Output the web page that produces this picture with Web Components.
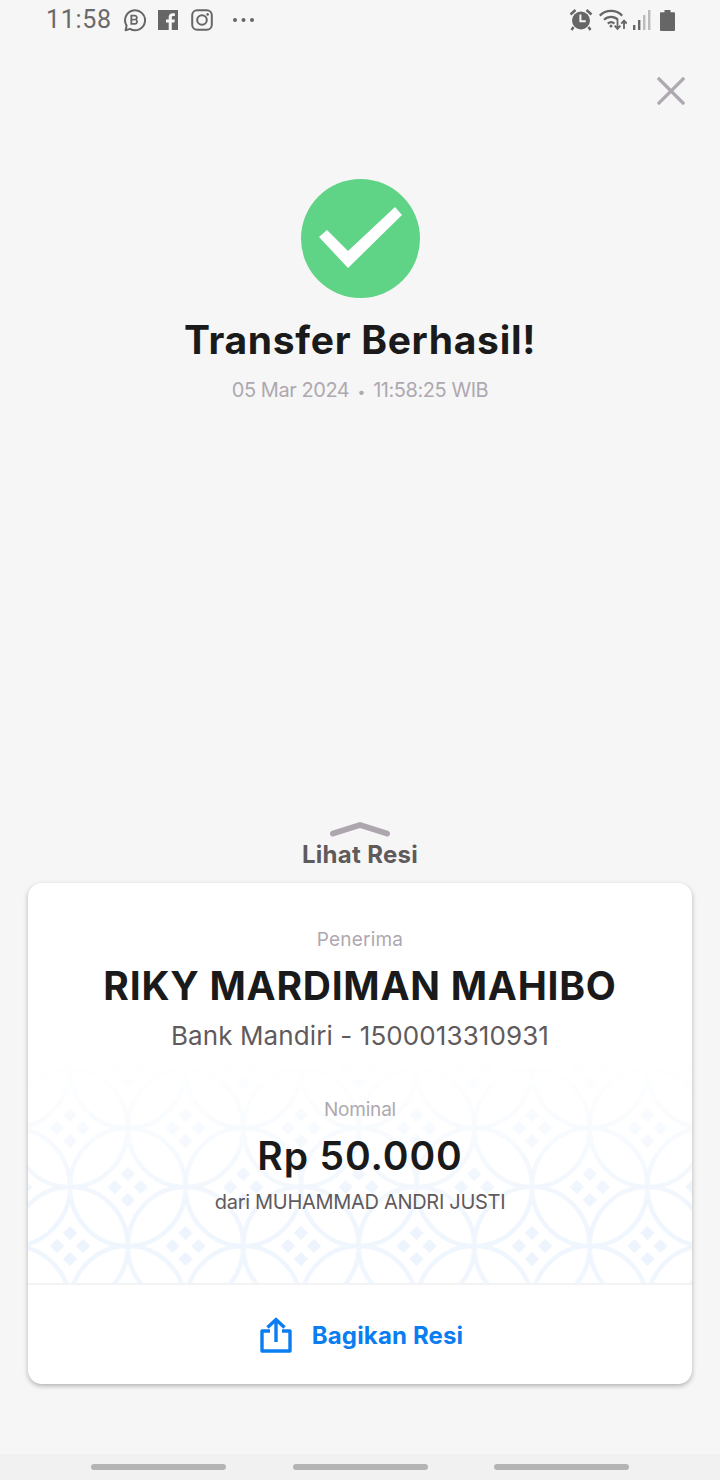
<!DOCTYPE html>
<html lang="id">
<head>
<meta charset="utf-8">
<title>Transfer Berhasil</title>
<style>
  html, body { margin: 0; padding: 0; background: #f6f6f6; }
  body { width: 720px; height: 1480px; overflow: hidden; font-family: Inter, "Liberation Sans", sans-serif; }
</style>
</head>
<body>
<transfer-screen>
  <status-bar time="11:58"></status-bar>
  <close-row></close-row>
  <success-hero heading="Transfer Berhasil!" day="05 Mar 2024" clock="11:58:25 WIB"></success-hero>
  <receipt-peek label="Lihat Resi"></receipt-peek>
  <receipt-card
    receiver="RIKY MARDIMAN MAHIBO"
    bank="Bank Mandiri - 1500013310931"
    amount="Rp 50.000"
    sender="dari MUHAMMAD ANDRI JUSTI"
    action="Bagikan Resi"></receipt-card>
  <nav-bar></nav-bar>
</transfer-screen>

<script>
class TransferScreen extends HTMLElement {
  constructor() {
    super();
    this.attachShadow({ mode: "open" });
    this.shadowRoot.innerHTML = `
      <style>
        :host { display: flex; flex-direction: column; height: 1480px; background: #f6f6f6; }
      </style>
      <slot></slot>
    `;
  }
}

class StatusBar extends HTMLElement {
  constructor() {
    super();
    this.attachShadow({ mode: "open" });
    this.shadowRoot.innerHTML = `
      <style>
        :host { display: flex; align-items: center; height: 40px; padding: 0 45px 0 46px; color: #666; }
        .time { font: 400 25px/40px Roboto, sans-serif; letter-spacing: .7px; color: #696969; margin-right: 10px; }
        .left, .right { display: flex; align-items: center; }
        .right { margin-left: auto; }
        svg { display: block; }
      </style>
      <div class="left">
        <span class="time" data-time></span>
        <svg width="24" height="24" viewBox="0 0 24 24" fill="none" stroke="#666" stroke-width="2">
          <path d="M3.600 22.200l1-4.600A10 10 0 1 1 8 20.900z" stroke-linejoin="round"/>
          <path d="M9.300 7.600h3.600a2 2 0 0 1 .6 3.900 2.200 2.200 0 0 1-.4 4.300H9.300z" stroke-width="1.800"/>
          <path d="M9.300 11.600h3.600" stroke-width="1.600"/>
        </svg>
        <svg style="margin-left:12px" width="20" height="20" viewBox="0 0 20 20">
          <path fill="#666" d="M0 0h20v20h-6.200v-7.600h2.600l.4-3h-3V7.500c0-.9.3-1.500 1.500-1.500h1.600V3.300c-.3 0-1.200-.1-2.300-.1-2.300 0-3.900 1.400-3.900 4v2.200H8v3h2.700V20H0z"/>
        </svg>
        <svg style="margin-left:13px" width="22" height="22" viewBox="0 0 22 22" fill="none" stroke="#666" stroke-width="2">
          <rect x="1.200" y="1.200" width="19.600" height="19.600" rx="5"/>
          <circle cx="11" cy="11" r="4.800"/>
          <circle cx="16.600" cy="5.400" r="1.300" fill="#666" stroke="none"/>
        </svg>
        <svg style="margin-left:19px" width="23" height="6" viewBox="0 0 23 6" fill="#666">
          <circle cx="3" cy="3" r="2"/><circle cx="11.500" cy="3" r="2"/><circle cx="20" cy="3" r="2"/>
        </svg>
      </div>
      <div class="right">
        <svg width="24" height="24" viewBox="0 0 24 24" fill="#666">
          <circle cx="12" cy="12.500" r="9"/>
          <path d="M1.500 6.500L6.500 2M22.500 6.500L17.500 2M4.500 19l-2 3M19.500 19l2 3" fill="none" stroke="#666" stroke-width="2.400"/>
          <path d="M11.400 6.500v6.800h5.400" fill="none" stroke="#f6f6f6" stroke-width="2"/>
        </svg>
        <svg style="margin-left:6px" width="28" height="22" viewBox="0 0 28 22" fill="none" stroke="#666" stroke-width="2.200">
          <path d="M.8 6.600C7 .4 17 .4 23.200 6.600"/>
          <path d="M5 10.800c4-4 10-4 14 0"/>
          <path d="M8.800 14.600c2-1.900 4.600-1.900 6.600 0"/>
          <circle cx="12" cy="17" r="1.500" fill="#666" stroke="none"/>
          <path d="M18.500 11v8M15.600 16.600l2.900 3.200 2.900-3.200M25 20v-8M22.300 14.600l2.700-3 2.700 3" stroke-width="1.800"/>
        </svg>
        <svg style="margin-left:6px" width="18" height="20" viewBox="0 0 18 20">
          <rect x="0" y="15" width="2.400" height="5" fill="#666"/>
          <rect x="5" y="10" width="2.400" height="10" fill="#666"/>
          <rect x="10" y="5" width="2.400" height="15" fill="#bbb"/>
          <rect x="15" y="0" width="2.400" height="20" fill="#bbb"/>
        </svg>
        <svg style="margin-left:9px" width="15" height="21" viewBox="0 0 15 21" fill="#666">
          <path d="M4.500 0h6v2.200H14a1 1 0 0 1 1 1V20a1 1 0 0 1-1 1H1a1 1 0 0 1-1-1V3.200a1 1 0 0 1 1-1h3.500z"/>
        </svg>
      </div>
    `;
    this.shadowRoot.querySelector("[data-time]").textContent = this.getAttribute("time");
  }
}

class CloseRow extends HTMLElement {
  constructor() {
    super();
    this.attachShadow({ mode: "open" });
    this.shadowRoot.innerHTML = `
      <style>
        :host { display: flex; justify-content: flex-end; padding: 37px 35px 0 0; }
        svg { display: block; }
      </style>
      <svg width="28" height="28" viewBox="0 0 28 28" fill="none" stroke="#aea8b0" stroke-width="3.200" stroke-linecap="square">
        <path d="M2 2l24 24M26 2L2 26"/>
      </svg>
    `;
  }
}

class SuccessHero extends HTMLElement {
  constructor() {
    super();
    this.attachShadow({ mode: "open" });
    this.shadowRoot.innerHTML = `
      <style>
        :host { display: flex; flex-direction: column; align-items: center; padding-top: 74px; }
        .badge { width: 119px; height: 119px; border-radius: 50%; background: #5fd386; }
        .badge svg { display: block; }
        h1 { margin: 18px 0 0; font: 700 39px/48px Inter, sans-serif; color: #1a1a1a; letter-spacing: .7px; }
        p { margin: 13px 0 0; font: 400 20px/26px Inter, sans-serif; color: #aea8b0; letter-spacing: -.45px; }
        p b { font-weight: 400; font-size: 14px; margin: 0 3px; }
      </style>
      <div class="badge">
        <svg width="119" height="119" viewBox="0 0 119 119">
          <path d="M18 58l8-7 21 21 47-44 7 8-54 53z" fill="#fff"/>
        </svg>
      </div>
      <h1 data-title></h1>
      <p><span data-day></span> <b>•</b> <span data-clock></span></p>
    `;
    this.shadowRoot.querySelector("[data-title]").textContent = this.getAttribute("heading");
    this.shadowRoot.querySelector("[data-day]").textContent = this.getAttribute("day");
    this.shadowRoot.querySelector("[data-clock]").textContent = this.getAttribute("clock");
  }
}

class ReceiptPeek extends HTMLElement {
  constructor() {
    super();
    this.attachShadow({ mode: "open" });
    this.shadowRoot.innerHTML = `
      <style>
        :host { display: flex; flex-direction: column; align-items: center; margin-top: auto; }
        svg { display: block; }
        span { font: 700 24px/30px Inter, sans-serif; color: #5f5a5c; margin-top: 2px; letter-spacing: .3px; }
      </style>
      <svg width="62" height="16" viewBox="0 0 62 16" fill="none" stroke="#aea6af" stroke-width="6" stroke-linecap="round" stroke-linejoin="round">
        <path d="M4 11.500L31 3l27 8.500"/>
      </svg>
      <span data-label></span>
    `;
    this.shadowRoot.querySelector("[data-label]").textContent = this.getAttribute("label");
  }
}

class BatikPattern extends HTMLElement {
  constructor() {
    super();
    this.attachShadow({ mode: "open" });
    // tile is one ring in the middle plus quarter rings in the corners
    this.shadowRoot.innerHTML = `
      <style>
        :host { display: block; position: absolute; left: 0; right: 0; bottom: 0; height: 224px;
          -webkit-mask-image: linear-gradient(to bottom, transparent 0, #000 150px); mask-image: linear-gradient(to bottom, transparent 0, #000 150px); }
        svg { display: block; width: 100%; height: 100%; }
      </style>
      <svg xmlns="http://www.w3.org/2000/svg">
        <defs>
          <g id="flower" fill="#edf4fd" stroke="#edf4fd" stroke-width="1" stroke-linejoin="round">
            <path d="M0-19.500l6.500 6.500-6.500 6.500-6.500-6.500zM0 6.500l6.500 6.500-6.500 6.500-6.500-6.500zM-13-6.500l6.500 6.500-6.500 6.500-6.500-6.500zM13-6.500l6.500 6.500-6.500 6.500-6.500-6.500z"/>
          </g>
          <pattern id="kawung" x="-15.750" y="10" width="115.500" height="118" patternUnits="userSpaceOnUse">
            <g fill="none" stroke="#f0f6fd" stroke-width="4.500">
              <ellipse cx="57.750" cy="59" rx="57.750" ry="59"/>
              <ellipse cx="0" cy="0" rx="57.750" ry="59"/>
              <ellipse cx="115.500" cy="0" rx="57.750" ry="59"/>
              <ellipse cx="0" cy="118" rx="57.750" ry="59"/>
              <ellipse cx="115.500" cy="118" rx="57.750" ry="59"/>
            </g>
            <use href="#flower" x="57.750" y="59"/>
            <use href="#flower" x="0" y="0"/>
            <use href="#flower" x="115.500" y="0"/>
            <use href="#flower" x="0" y="118"/>
            <use href="#flower" x="115.500" y="118"/>
          </pattern>
        </defs>
        <rect width="100%" height="100%" fill="url(#kawung)"/>
      </svg>
    `;
  }
}

class ReceiptCard extends HTMLElement {
  constructor() {
    super();
    this.attachShadow({ mode: "open" });
    this.shadowRoot.innerHTML = `
      <style>
        :host { display: block; margin: 13px 28px 0; background: #fff; border-radius: 14px; box-shadow: 0 2px 5px rgba(0,0,0,.28); overflow: hidden; }
        .body { position: relative; height: 402px; box-sizing: border-box; padding-top: 44px; display: flex; flex-direction: column; align-items: center; border-bottom: 2px solid #f3f3f3; }
        .body > div { position: relative; }
        .cap { font: 400 19px/26px Inter, sans-serif; color: #aea8b0; letter-spacing: .2px; }
        .name { font: 700 39px/46px Inter, sans-serif; color: #1a1a1a; margin-top: 10px; letter-spacing: .75px; }
        .bank { font: 400 26px/34px Inter, sans-serif; color: #5f5a5c; margin-top: 10px; letter-spacing: .1px; }
        .nominal { margin-top: 44px; letter-spacing: -.2px; }
        .amount { font: 600 39px/48px Inter, sans-serif; color: #1a1a1a; margin-top: 9px; letter-spacing: .9px; }
        .sender { font: 400 20px/28px Inter, sans-serif; color: #5f5a5c; margin-top: 8px; letter-spacing: -.3px; }
        .action { height: 99px; padding-left: 3px; display: flex; align-items: center; justify-content: center; gap: 20px; color: #0a7df0; font: 700 24px/30px Inter, sans-serif; letter-spacing: .15px; }
        .action span { margin-top: 2px; }
        svg { display: block; }
      </style>
      <div class="body">
        <batik-pattern></batik-pattern>
        <div class="cap">Penerima</div>
        <div class="name" data-receiver></div>
        <div class="bank" data-bank></div>
        <div class="cap nominal">Nominal</div>
        <div class="amount" data-amount></div>
        <div class="sender" data-sender></div>
      </div>
      <div class="action">
        <svg width="32" height="36" viewBox="0 0 32 36" fill="none" stroke="#0a7df0" stroke-width="3.400">
          <path d="M10 14H2v20h28V14h-8" stroke-linejoin="round"/>
          <path d="M16 25V3M7.500 10.500L16 2.500l8.500 8"/>
        </svg>
        <span data-action></span>
      </div>
    `;
    for (const key of ["receiver", "bank", "amount", "sender", "action"]) {
      this.shadowRoot.querySelector(`[data-${key}]`).textContent = this.getAttribute(key);
    }
  }
}

class NavBar extends HTMLElement {
  constructor() {
    super();
    this.attachShadow({ mode: "open" });
    this.shadowRoot.innerHTML = `
      <style>
        :host { display: flex; justify-content: space-between; height: 26px; box-sizing: border-box; margin-top: 70px; padding: 10px 91px 0; background: #f1f1f1; }
        i { display: block; width: 135px; height: 6px; border-radius: 3px; background: #b4b4b4; }
      </style>
      <i></i><i></i><i></i>
    `;
  }
}

customElements.define("transfer-screen", TransferScreen);
customElements.define("status-bar", StatusBar);
customElements.define("close-row", CloseRow);
customElements.define("success-hero", SuccessHero);
customElements.define("receipt-peek", ReceiptPeek);
customElements.define("batik-pattern", BatikPattern);
customElements.define("receipt-card", ReceiptCard);
customElements.define("nav-bar", NavBar);
</script>
</body>
</html>
